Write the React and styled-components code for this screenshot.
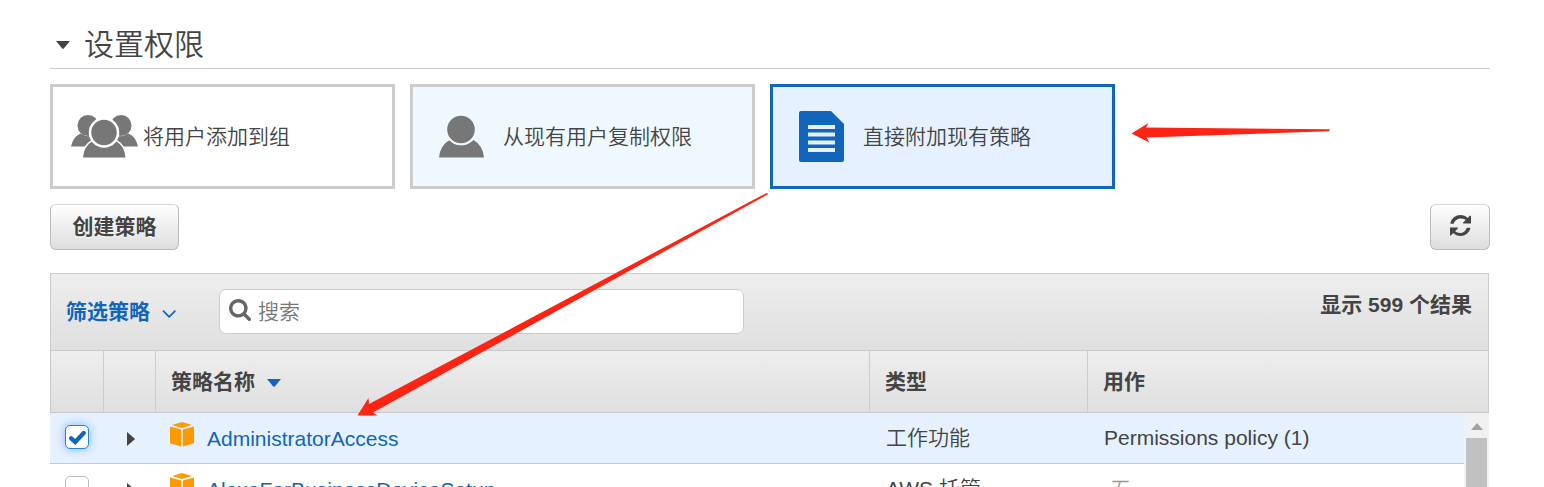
import React from "react";
import styled, { createGlobalStyle, css } from "styled-components";

const Global = createGlobalStyle`
  * { box-sizing: border-box; }
  body { margin: 0; background: #fff; overflow: hidden; }
`;

const Page = styled.main`
  position: relative;
  height: 487px;
  overflow: hidden;
  padding: 20px 54px 0 50px;
  color: #444;
  font: 350 21px/30px "Liberation Sans", "Noto Sans CJK SC", sans-serif;
  svg { display: block; flex: none; }
`;

const SectionTitle = styled.h2`
  display: flex;
  align-items: center;
  gap: 14px;
  height: 49px;
  margin: 0 0 15px;
  padding: 2px 0 0 6px;
  border-bottom: 1px solid #ccc;
  font-size: 30px;
  font-weight: 350;
`;

const Options = styled.div`
  display: flex;
  gap: 15px;
`;

const looks = {
  plain: css`background: #fff; border-color: #ccc;`,
  hover: css`background: #f0f8ff; border-color: #ccc;`,
  selected: css`background: #e5f1fe; border-color: #1166bb;`,
};

const Option = styled.button`
  display: flex;
  align-items: center;
  width: 345px;
  height: 105px;
  padding: 0;
  border: 3px solid;
  color: inherit;
  font: inherit;
  ${(p) => looks[p.$look]}
`;

const OptionIcon = styled.span`
  display: flex;
  justify-content: ${(p) => (p.$wide ? "flex-start" : "center")};
  width: ${(p) => (p.$wide ? 71 : 69)}px;
  margin-left: ${(p) => (p.$wide ? 18 : 14)}px;
  margin-right: ${(p) => (p.$wide ? 0 : 6)}px;
`;

const OptionLabel = styled.span`
  padding: 1px 0 0 1px;
`;

const Actions = styled.div`
  display: flex;
  justify-content: space-between;
  margin: 15px 0 23px;
`;

const Button = styled.button`
  display: flex;
  align-items: center;
  justify-content: center;
  width: ${(p) => p.$width}px;
  height: 46px;
  padding: 0 0 ${(p) => (p.$icon ? 3 : 0)}px;
  border: 1px solid #bbb;
  border-top-color: #d5d5d5;
  border-radius: 6px;
  background: linear-gradient(#fff, #ddd);
  color: #444;
  font: inherit;
  font-weight: 700;
  text-shadow: 0 1px 1px #fff;
`;

const Table = styled.section`
  width: 1439px;
`;

const Toolbar = styled.div`
  display: flex;
  align-items: flex-start;
  height: 77px;
  padding: 15px 16px 0 15px;
  border: 1px solid #ccc;
  border-bottom: 0;
  background: linear-gradient(#eee, #dfdfdf);
`;

const Filter = styled.div`
  display: flex;
  align-items: center;
  gap: 12px;
  width: 153px;
  height: 45px;
  color: #1166bb;
  font-weight: 700;
  svg { margin-top: 4px; }
`;

const Search = styled.div`
  display: flex;
  align-items: center;
  gap: 7px;
  width: 525px;
  height: 45px;
  padding: 0 9px;
  border: 1px solid #ccc;
  border-radius: 7px;
  background: #fff;
  color: #777;
  svg { margin-bottom: 3px; }
`;

const Count = styled.div`
  margin-left: auto;
  padding-top: 1px;
  font-weight: 700;
`;

const HeaderRow = styled.div`
  display: grid;
  grid-template-columns: 52px 52px 714px 218px 1fr;
  height: 63px;
  border: 1px solid #c8c8c8;
  border-right-color: #ccc;
  background: linear-gradient(#eee, #dfdfdf);
  font-weight: 700;
`;

const HeaderCell = styled.div`
  display: flex;
  align-items: center;
  gap: 12px;
  padding-left: 15px;
  & + & { border-left: 1px solid #ccc; }
  svg { margin-top: 3px; }
`;

const Body = styled.div`
  display: flex;
`;

const Rows = styled.div`
  flex: 1;
`;

const Row = styled.div`
  display: grid;
  grid-template-columns: 68px 52px 716px 218px 1fr;
  align-items: center;
  height: 51px;
  border-bottom: 1px solid #c4cad0;
  background: ${(p) => (p.$selected ? "#e5f1fe" : "#fff")};
`;

const CheckBox = styled.span`
  display: flex;
  align-items: center;
  justify-content: center;
  width: 24px;
  height: 24px;
  margin: 0 0 2px 15px;
  border: 1px solid ${(p) => (p.$checked ? "#2284e0" : "#bbb")};
  border-radius: 5px;
  background: #fff;
  box-shadow: ${(p) => (p.$checked ? "0 0 10px #7db8f5" : "none")};
`;

const Expander = styled.span`
  padding: 2px 0 0 9px;
`;

const Name = styled.span`
  display: flex;
  align-items: center;
  gap: 13px;
  height: 50px;
  color: #1166bb;
  svg { margin-bottom: 7px; }
`;

const NameText = styled.span`
  padding-top: 1px;
`;

const Muted = styled.span`
  padding: 2px 0 0 2px;
  color: #999;
  font-style: italic;
`;

const ScrollTrack = styled.div`
  display: flex;
  flex-direction: column;
  align-items: center;
  gap: 8px;
  width: 25px;
  height: 120px;
  padding-top: 10px;
  background: #f1f1f1;
`;

const ScrollThumb = styled.div`
  width: 21px;
  flex: 1;
  background: #c1c1c1;
`;

const Annotations = styled.svg`
  position: absolute;
  left: 0;
  top: 0;
  pointer-events: none;
`;

const CaretDown = ({ color }) => (
  <svg width="14" height="8" viewBox="0 0 14 8"><path d="M0 0H14L7.800 7.400Q7 8.200 6.200 7.400Z" fill={color} /></svg>
);

const GroupIcon = () => (
  <svg width="68" height="44" viewBox="0 0 68 44" fill="#777">
    <circle cx="17" cy="10.500" r="10.500" />
    <circle cx="50" cy="10.500" r="10.500" />
    <path d="M0 31.500Q2 22 9.500 18.500Q15 22 21 21L24 31.500Z" />
    <path d="M67 31.500Q65 22 57.500 18.500Q52 22 46 21L43 31.500Z" />
    <path d="M12 42.500Q13 31 21 26.500Q33 37 45.500 26.500Q53.500 31 54.500 42.500Z" stroke="#fff" strokeWidth="3" paintOrder="stroke" />
    <circle cx="33" cy="17.500" r="14" stroke="#fff" strokeWidth="2.500" />
  </svg>
);

const UserIcon = () => (
  <svg width="45" height="43" viewBox="0 0 45 43" fill="#777">
    <path d="M0 42.500Q1 30.500 10.500 25Q22.500 35.500 34.500 25Q44 30.500 45 42.500Z" />
    <circle cx="22" cy="14.500" r="14.800" stroke="#f0f8ff" strokeWidth="2" />
  </svg>
);

const DocumentIcon = () => (
  <svg width="45" height="51" viewBox="0 0 45 51">
    <path d="M2 0H32L45 13V49Q45 51 43 51H2Q0 51 0 49V2Q0 0 2 0Z" fill="#1166bb" />
    <path d="M9 16H36M9 23.500H36M9 31.500H36M9 39H36" stroke="#e5f1fe" strokeWidth="4" />
  </svg>
);

const RefreshIcon = () => (
  <svg width="21" height="21" viewBox="0 128 1536 1536" fill="#444">
    <path d="M1511 1056q0 5-1 7-64 268-268 434.500T764 1664q-146 0-282.500-55T238 1452l-174 174H0v-576h576v64l-201 201q71 66 161 102t187 36q134 0 250-65t186-179q11-17 53-117 8-23 30-23h192q13 0 22.500 9.500t9.500 22.500zm25-870v556h-576v-64l202-202Q969 384 768 384q-134 0-250 65T332 628q-11 17-53 117-8 23-30 23H50q-13 0-22.500-9.500T18 736v-7q65-268 270-434.500T768 128q146 0 284 55.500T1297 340l154-154z" />
  </svg>
);

const SearchIcon = () => (
  <svg width="22" height="22" viewBox="64 128 1664 1664" fill="#666">
    <path d="M1216 832q0-185-131.500-316.500T768 384 451.500 515.500 320 832t131.500 316.500T768 1280t316.500-131.500T1216 832zm512 832q0 52-38 90t-90 38q-54 0-90-38l-343-342q-179 124-399 124-143 0-273.500-55.500t-225-150-150-225T64 832t55.500-273.500 150-225 225-150T768 128t273.500 55.500 225 150 150 225T1472 832q0 220-124 399l343 343q37 37 37 90z" />
  </svg>
);

const CheckIcon = () => (
  <svg width="17" height="15" viewBox="0 0 17 15">
    <path d="M2.200 8.300L6.200 12L14.700 3" fill="none" stroke="#1166bb" strokeWidth="4.300" strokeLinecap="round" />
  </svg>
);

const CubeIcon = () => (
  <svg width="24" height="25" viewBox="0 0 24 25" fill="#f90">
    <path d="M12 0L22 2.900L12 6L2 2.900Z" />
    <path d="M0 4.500L11.200 7.600V24.500L0 21.300Z" />
    <path d="M24 4.500L12.800 7.600V24.500L24 21.300Z" />
  </svg>
);

const policies = [
  { name: "AdministratorAccess", type: "工作功能", usage: "Permissions policy (1)", selected: true },
  { name: "AlexaForBusinessDeviceSetup", type: "AWS 托管", usage: null, selected: false },
];

export default function App() {
  return (
    <>
      <Global />
      <Page>
        <SectionTitle><CaretDown color="#444" />设置权限</SectionTitle>
        <Options>
          <Option $look="plain"><OptionIcon $wide><GroupIcon /></OptionIcon><OptionLabel>将用户添加到组</OptionLabel></Option>
          <Option $look="hover"><OptionIcon><UserIcon /></OptionIcon><OptionLabel>从现有用户复制权限</OptionLabel></Option>
          <Option $look="selected"><OptionIcon><DocumentIcon /></OptionIcon><OptionLabel>直接附加现有策略</OptionLabel></Option>
        </Options>
        <Actions>
          <Button $width={129}>创建策略</Button>
          <Button $width={60} $icon aria-label="刷新"><RefreshIcon /></Button>
        </Actions>
        <Table>
          <Toolbar>
            <Filter>
              筛选策略
              <svg width="14" height="8" viewBox="0 0 14 8"><path d="M1 .7L7.200 6.900L13.400 .7" fill="none" stroke="#1166bb" strokeWidth="1.700" /></svg>
            </Filter>
            <Search><SearchIcon />搜索</Search>
            <Count>显示 599 个结果</Count>
          </Toolbar>
          <HeaderRow>
            <HeaderCell />
            <HeaderCell />
            <HeaderCell>策略名称<CaretDown color="#1166bb" /></HeaderCell>
            <HeaderCell>类型</HeaderCell>
            <HeaderCell>用作</HeaderCell>
          </HeaderRow>
          <Body>
            <Rows>
              {policies.map((p) => (
                <Row key={p.name} $selected={p.selected}>
                  <CheckBox $checked={p.selected}>{p.selected && <CheckIcon />}</CheckBox>
                  <Expander>
                    <svg width="8" height="14" viewBox="0 0 8 14"><path d="M0 0L7.600 6.400Q8.200 7 7.600 7.600L0 14Z" fill="#444" /></svg>
                  </Expander>
                  <Name><CubeIcon /><NameText>{p.name}</NameText></Name>
                  <span>{p.type}</span>
                  {p.usage ? <span>{p.usage}</span> : <Muted>无</Muted>}
                </Row>
              ))}
            </Rows>
            <ScrollTrack>
              <svg width="12" height="7" viewBox="0 0 12 7"><path d="M0 7L6 0L12 7Z" fill="#a3a3a3" /></svg>
              <ScrollThumb />
            </ScrollTrack>
          </Body>
        </Table>
        <Annotations width="1544" height="487" viewBox="0 0 1544 487" fill="#ff2314">
          <path d="M1131.500 133.500L1148.500 123L1146 127.500L1329 129.300Q1330.500 130.300 1329 131.200L1146.500 137.500L1149.500 142.500Z" />
          <path d="M357.500 415.500L368.500 398L369 404L766.500 193Q768.500 193 767.500 194.500L373 412.500L377.500 415.500Z" />
        </Annotations>
      </Page>
    </>
  );
}
